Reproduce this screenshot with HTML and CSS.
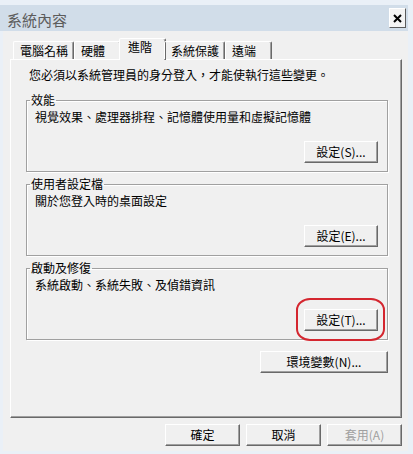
FILE: index.html
```html
<!DOCTYPE html>
<html lang="zh-Hant">
<head>
<meta charset="utf-8">
<title>系統內容</title>
<link rel="stylesheet" href="styles.css">
</head>
<body>
<div class="window">
  <div class="titlebar">
    <span class="title">系統內容</span>
    <span class="close">
      <svg width="9" height="9" viewBox="0 0 9 9"><path d="M1 1 L8 8 M8 1 L1 8" stroke="#000" stroke-width="2" fill="none"/></svg>
    </span>
  </div>
  <div class="dialog">
    <div class="tabs">
      <div class="tab">電腦名稱</div>
      <div class="tab">硬體</div>
      <div class="tab selected">進階</div>
      <div class="tab">系統保護</div>
      <div class="tab">遠端</div>
    </div>
    <div class="panel">
      <p class="intro">您必須以系統管理員的身分登入，才能使執行這些變更。</p>
      <fieldset class="group first">
        <legend>效能</legend>
        <p class="desc">視覺效果、處理器排程、記憶體使用量和虛擬記憶體</p>
        <div class="btnrow"><button class="btn">設定(S)...</button></div>
      </fieldset>
      <fieldset class="group">
        <legend>使用者設定檔</legend>
        <p class="desc">關於您登入時的桌面設定</p>
        <div class="btnrow"><button class="btn">設定(E)...</button></div>
      </fieldset>
      <fieldset class="group">
        <legend>啟動及修復</legend>
        <p class="desc">系統啟動、系統失敗、及偵錯資訊</p>
        <div class="btnrow"><span class="marked"><button class="btn">設定(T)...</button><span class="ring"></span></span></div>
      </fieldset>
      <div class="envrow"><button class="btn wide">環境變數(N)...</button></div>
    </div>
    <div class="actions">
      <button class="btn">確定</button>
      <button class="btn">取消</button>
      <button class="btn disabled">套用(A)</button>
    </div>
  </div>
</div>
</body>
</html>
```
FILE: styles.css
```css
* { box-sizing: border-box; }
html, body { margin: 0; padding: 0; }
body {
  width: 413px;
  height: 454px;
  overflow: hidden;
  background: #eaf0f7;
  font-family: "Noto Sans CJK TC", "Noto Sans", sans-serif;
  font-size: 12px;
  color: #000;
}
.window { width: 408px; padding-top: 5px; }
.titlebar {
  height: 26px;
  background: #d1dde9;
  display: flex;
  align-items: center;
  justify-content: space-between;
  padding: 0 2px 0 7px;
}
.title { font-size: 15px; color: #5c5c5c; line-height: 26px; padding-top: 3px; }
.close {
  width: 17px;
  height: 20px;
  background: #f3f3f3;
  border: 1px solid;
  border-color: #fff #5a5a5a #5a5a5a #fff;
  display: flex;
  align-items: center;
  justify-content: center;
}
.dialog {
  margin-left: 3px;
  height: 420px;
  background: #f0f0f0;
  padding: 7px 6px 0 7px;
}
.tabs {
  display: flex;
  align-items: flex-end;
  height: 21px;
  padding-left: 3px;
  position: relative;
  z-index: 1;
}
.tab {
  height: 18px;
  min-width: 47px;
  padding: 0 5px 0 6px;
  line-height: 17px;
  white-space: nowrap;
  border: 1px solid;
  border-bottom: none;
  border-color: #fff #696969 transparent #fff;
  box-shadow: inset -1px 0 0 #a0a0a0;
  border-radius: 2px 2px 0 0;
}
.tab.selected {
  height: 22px;
  margin: 0 -2px -1px;
  padding: 0 7px 0 8px;
  line-height: 15px;
  background: #f0f0f0;
}
.panel {
  height: 359px;
  border: 1px solid;
  border-color: #fff #696969 #696969 #fff;
  box-shadow: inset -1px -1px 0 #a0a0a0;
  padding: 7px 13px 0 15px;
}
.intro { margin: 0 0 0 3px; line-height: 16px; }
.group {
  margin: 4px 0 0;
  padding: 0 9px 8px 8px;
  border: 1px solid #a0a0a0;
  box-shadow: inset 1px 1px 0 #fff, 1px 1px 0 #fff;
  min-width: 0;
}
.group.first { margin-top: 9px; }
.group legend {
  padding: 0 1px;
  margin-left: -5px;
  line-height: 16px;
}
.desc { margin: 1px 0 0; line-height: 16px; }
.btnrow { display: flex; justify-content: flex-end; margin-top: 16px; }
.btn {
  width: 74px;
  height: 22px;
  padding: 0;
  font: inherit;
  line-height: 20px;
  color: #000;
  background: #f0f0f0;
  border: 1px solid;
  border-color: #fff #696969 #696969 #fff;
  box-shadow: inset -1px -1px 0 #a0a0a0;
}
.btn.wide { width: 128px; }
.btn.disabled { color: #a0a0a0; }
.marked { position: relative; display: flex; }
.ring {
  position: absolute;
  left: -8px;
  right: -7px;
  top: -11px;
  bottom: -10px;
  border: 2px solid #d4262f;
  border-radius: 14px / 12px;
}
.envrow { display: flex; justify-content: flex-end; margin-top: 11px; }
.actions {
  display: flex;
  justify-content: flex-end;
  gap: 6px;
  margin-top: 6px;
}
.actions .btn { width: 75px; }
```
